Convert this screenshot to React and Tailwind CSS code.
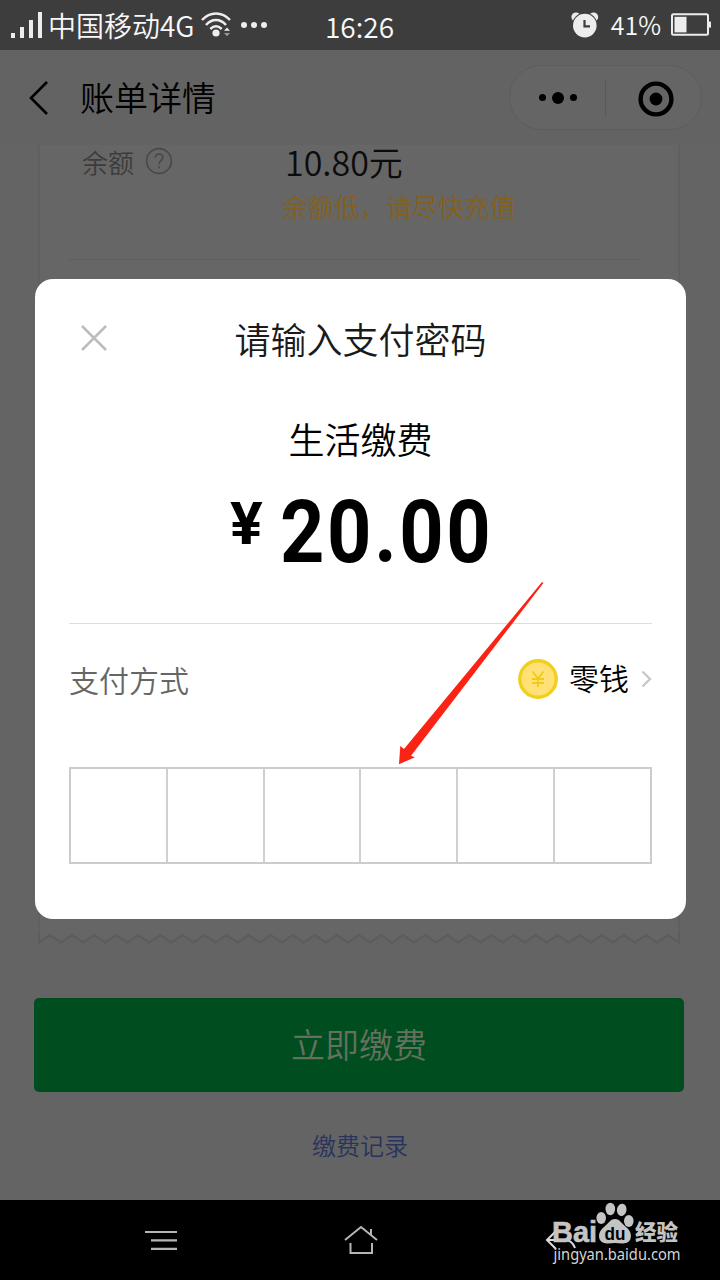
const CJK = "font-['Noto_Sans_CJK_SC',sans-serif]";

const PIN_LENGTH = 6;
const TEETH = 29;

// bottom edge of the receipt, one tooth per 22.07px
const zigzag = Array.from({ length: TEETH }, (_, i) => {
  const x = 1 + i * 22.07;
  return `L${(x + 11).toFixed(1)} 2 L${(x + 22.07).toFixed(1)} 9.5`;
}).join(' ');

function SignalIcon() {
  return (
    <svg width="32" height="27" viewBox="0 0 32 27" fill="#ededed">
      <rect x="0" y="21" width="4" height="5" />
      <rect x="9" y="15" width="4" height="11" />
      <rect x="18" y="8" width="4" height="18" />
      <rect x="27" y="0" width="4" height="26" />
    </svg>
  );
}

function WifiIcon() {
  return (
    <svg width="30" height="26" viewBox="0 0 30 26" fill="none" stroke="#ededed" strokeWidth="2.5">
      <path d="M1 8 C9 -0.8 21 -0.8 29 8" />
      <path d="M5 13 C11 6.4 19 6.4 25 13" />
      <path d="M9.3 17 C13 13.4 17 13.4 20.7 17" />
      <circle cx="15" cy="21" r="3.6" fill="#ededed" stroke="none" />
      <path d="M23 18.8 L26 15.5 L29 18.8 Z" fill="#ededed" stroke="none" />
      <path d="M23 21 L26 24.2 L29 21 Z" fill="#999999" stroke="none" />
    </svg>
  );
}

function AlarmIcon() {
  return (
    <svg width="28" height="27" viewBox="0 0 28 27">
      <circle cx="5" cy="5" r="4.6" fill="#ededed" />
      <circle cx="22.6" cy="5" r="4.6" fill="#ededed" />
      <circle cx="13.8" cy="13.6" r="12.8" fill="#3d3d3d" />
      <circle cx="13.8" cy="13.6" r="11.8" fill="#ededed" />
      <path d="M13.5 8 V14.3 H19" fill="none" stroke="#3d3d3d" strokeWidth="2.2" />
    </svg>
  );
}

function BatteryIcon() {
  return (
    <svg width="41" height="24" viewBox="0 0 41 24">
      <rect x="1" y="1.2" width="36" height="20.6" rx="1.5" fill="none" stroke="#ededed" strokeWidth="2" />
      <rect x="3.5" y="3.8" width="12" height="15.6" fill="#ededed" />
      <rect x="38" y="8.6" width="2" height="6" fill="#ededed" />
    </svg>
  );
}

function StatusBar() {
  return (
    <div className="flex h-[50px] items-center bg-[#3d3d3d] pl-[11px] pr-2 font-[350] text-[#f8f8f8]">
      <div className="flex w-[314px] items-center">
        <SignalIcon />
        <span className="ml-[5px] w-[149px] whitespace-nowrap text-[28px] leading-[50px]">
          中国移动4G
        </span>
        <span className="ml-[4px]">
          <WifiIcon />
        </span>
        <span className="ml-[10px] flex gap-[4.5px]">
          <i className="size-[5.5px] rounded-full bg-[#ededed]" />
          <i className="size-[5.5px] rounded-full bg-[#ededed]" />
          <i className="size-[5.5px] rounded-full bg-[#ededed]" />
        </span>
      </div>
      <span className="mt-px text-[28px] leading-[50px]">16:26</span>
      <div className="ml-auto flex items-center">
        <AlarmIcon />
        <span className="-mt-[3px] ml-3 mr-[10px] text-[25px] leading-[50px]">41%</span>
        <BatteryIcon />
      </div>
    </div>
  );
}

function Header() {
  return (
    <div className="flex h-[95px] items-center bg-[#636363] pl-[29px] pr-[18px]">
      <svg width="20" height="36" viewBox="0 0 20 36" fill="none" stroke="#000" strokeWidth="2.6">
        <path d="M18 2 L2 18 L18 34" />
      </svg>
      <h1 className="-mt-[2px] ml-[31px] text-[34px] font-[350] leading-[50px] text-black">账单详情</h1>
      <div className="ml-auto flex h-[65px] w-[193px] items-center rounded-full border border-[#5d5d5d] bg-[#656565]">
        <div className="flex w-[95px] items-center justify-center gap-[6px]">
          <i className="size-[7px] rounded-full bg-black" />
          <i className="size-3 rounded-full bg-black" />
          <i className="size-[7px] rounded-full bg-black" />
        </div>
        <div className="h-[38px] w-px bg-[#595959]" />
        <div className="flex flex-1 justify-center pl-[5px] pt-[3px]">
          <svg width="36" height="36" viewBox="0 0 36 36">
            <circle cx="18" cy="18" r="15.4" fill="none" stroke="#000" strokeWidth="4.4" />
            <circle cx="18" cy="18" r="6.4" />
          </svg>
        </div>
      </div>
    </div>
  );
}

function Receipt() {
  return (
    <div className="ml-[38px] flex h-[800px] w-[642px] flex-col">
      <div className="flex-1 border-x-2 border-[#606060] bg-[#666666] pl-[28px] pr-[36px]">
        <div className="flex h-[115px] border-b border-[#5f5f5f]">
          <div className="flex h-[33px] w-[214px] items-center pl-[14px]">
            <span className="-mt-px text-[26px] font-[350] text-[#3c3c3c]">余额</span>
            <svg className="-mt-px ml-[11px]" width="28" height="28" viewBox="0 0 28 28" fill="none" stroke="#484848" strokeWidth="1.6">
              <circle cx="14" cy="14" r="12.4" />
              <path d="M10.2 10.8 C10.4 5.6 18 5.8 17.8 10.6 C17.6 13.4 14 13.4 14 17.2" />
              <path d="M14 19.2 V21.2" />
            </svg>
          </div>
          <div className="font-[350]">
            <p className="-mt-px pl-[3px] text-[34px] leading-[36px] text-[#0c0c0c]">10.80元</p>
            <p className="mt-[6px] text-[26px] leading-[40px] text-[#84611a]">余额低，请尽快充值</p>
          </div>
        </div>
      </div>
      <svg width="642" height="12" viewBox="0 0 642 12">
        <path d={`M1 0 V9.5 ${zigzag} V0 Z`} fill="#666666" />
        <path d={`M1 0 V9.5 ${zigzag} V0`} fill="none" stroke="#5c5c5c" strokeWidth="2" />
      </svg>
    </div>
  );
}

function CloseIcon() {
  return (
    <svg width="26" height="26" viewBox="0 0 26 26" fill="none" stroke="#bdbdbd" strokeWidth="2.6">
      <path d="M1 1 L25 25 M25 1 L1 25" />
    </svg>
  );
}

function CoinIcon() {
  return (
    <svg width="40" height="40" viewBox="0 0 40 40">
      <circle cx="20" cy="20" r="18.2" fill="#ffe175" stroke="#f1cf1c" strokeWidth="3.4" />
      <path
        d="M14.5 12.5 L20 19.5 L25.5 12.5 M20 19.5 V28 M14 20 H26 M14 24 H26"
        fill="none"
        stroke="#f0cb1d"
        strokeWidth="1.8"
      />
    </svg>
  );
}

function PayDialog() {
  return (
    <div className="absolute inset-x-0 top-[229px] ml-[35px] h-[640px] w-[651px] rounded-[18px] bg-white px-[34px]">
      <div className="grid grid-cols-[50px_1fr_50px] items-center pt-[29px]">
        <span className="pl-3">
          <CloseIcon />
        </span>
        <h2 className="text-center text-[36px] font-[350] leading-[60px] text-[#1a1a1a]">请输入支付密码</h2>
      </div>
      <p className="mt-[40px] text-center text-[36px] font-[350] leading-[60px] text-black">生活缴费</p>
      <div className="mt-[2px] flex h-[90px] items-start justify-center font-['Roboto',sans-serif] text-black">
        <span className="mt-[24px] w-[50px] text-[60px] font-bold leading-[60px]">
          <span className="block origin-left scale-x-[1.02]">¥</span>
        </span>
        <span className="w-[212px] text-[88px] font-bold leading-[124px]">
          <span className="block origin-left scale-x-[0.88] tracking-[3px]">20.00</span>
        </span>
      </div>
      <div className="mt-[63px] flex h-[112px] items-center border-t border-[#dedede]">
        <span className="-mt-px text-[30px] font-[350] text-[#666666]">支付方式</span>
        <div className="-mt-[2px] ml-auto flex items-center">
          <CoinIcon />
          <span className="-mt-[2px] ml-[11px] mr-3 text-[30px] font-[350] text-black">零钱</span>
          <svg width="11" height="18" viewBox="0 0 11 18" fill="none" stroke="#c8c8c8" strokeWidth="2.4">
            <path d="M1.5 1.5 L9 9 L1.5 16.5" />
          </svg>
        </div>
      </div>
      <div className="mt-8 flex h-[97px] divide-x-2 divide-[#d0d0d0] border-2 border-[#cccccc]">
        {Array.from({ length: PIN_LENGTH }, (_, i) => (
          <div key={i} className="flex-1" />
        ))}
      </div>

      {/* Pointer to the password boxes */}
      <svg className="absolute left-[360px] top-[300px]" width="152" height="190" viewBox="395 579 152 190">
        <path d="M542 582 L404 749 L400.3 746 L399 764.2 L415 757.2 L411 755.7 L543.4 583 Z" fill="#fb2314" />
      </svg>
    </div>
  );
}

function NavBar() {
  return (
    <div className="relative flex h-20 items-center bg-black">
      <svg className="ml-[144px] mt-[2px]" width="34" height="22" viewBox="0 0 34 22" stroke="#b5b5b5" strokeWidth="2.2">
        <path d="M1 2 H33 M7 10.4 H33 M7 18.8 H33" />
      </svg>
      <svg
        className="ml-[165px]"
        width="36"
        height="30"
        viewBox="0 0 36 30"
        fill="none"
        stroke="#b5b5b5"
        strokeWidth="2"
      >
        <path d="M2 15 L18 2 L34 15 M28 10 V4 M7.5 18 V28 H29 V18" />
      </svg>
      <svg className="ml-[166px]" width="34" height="24" viewBox="0 0 34 24" fill="none" stroke="#dddddd" strokeWidth="2">
        <path d="M11 3 L2 12 L11 21 M2 12 H20 Q27 12 30 20" />
      </svg>

      {/* Site watermark */}
      <svg className="absolute left-[545px] top-0" width="145" height="80" viewBox="545 1200 145 80" fill="#c4c4c4">
        <text
          x="552"
          y="1242"
          fontFamily="Liberation Sans"
          fontWeight="700"
          fontSize="29"
          stroke="#c4c4c4"
          strokeWidth="0.6"
          textLength="45"
          lengthAdjust="spacingAndGlyphs"
        >
          Bai
        </text>
        <ellipse cx="601.2" cy="1218" rx="4.8" ry="6" />
        <ellipse cx="610.3" cy="1209" rx="4.8" ry="6.2" />
        <ellipse cx="621.7" cy="1209.8" rx="4.8" ry="6.2" transform="rotate(10 621.7 1209.8)" />
        <ellipse cx="628.8" cy="1221" rx="4.8" ry="6" />
        <path d="M615 1219 C620 1219 622 1224 626 1227 C631 1231 632 1236 630 1240 C627 1245 620 1243 615 1243 C610 1243 603 1245 600 1240 C598 1236 599 1231 604 1227 C608 1224 610 1219 615 1219 Z" />
        <text
          x="604.5"
          y="1239.5"
          fill="#000"
          fontFamily="Liberation Sans"
          fontWeight="700"
          fontSize="18"
          textLength="21"
          lengthAdjust="spacingAndGlyphs"
        >
          du
        </text>
        <text x="635" y="1240" fontFamily="Noto Sans CJK SC" fontWeight="900" fontSize="21.5">
          经验
        </text>
        <text x="553.5" y="1259.5" fill="#d4d4d4" fontFamily="Noto Sans" fontSize="15.5" textLength="127" lengthAdjust="spacingAndGlyphs">
          jingyan.baidu.com
        </text>
      </svg>
    </div>
  );
}

export default function App() {
  return (
    <div className={`flex h-[1280px] w-[720px] flex-col overflow-hidden bg-[#646464] ${CJK}`}>
      <StatusBar />
      <div className="relative flex-1">
        <Header />
        <Receipt />
        <div className="mt-[53px] flex flex-col items-center">
          <button className="-ml-[2px] h-[94px] w-[650px] rounded-[5px] bg-[#004d20] pb-1 text-[34px] font-[350] text-[#66705f]">
            立即缴费
          </button>
          <a className="mt-[33px] text-[24px] font-[350] leading-[40px] text-[#28345c]">缴费记录</a>
        </div>
        <PayDialog />
      </div>
      <NavBar />
    </div>
  );
}
